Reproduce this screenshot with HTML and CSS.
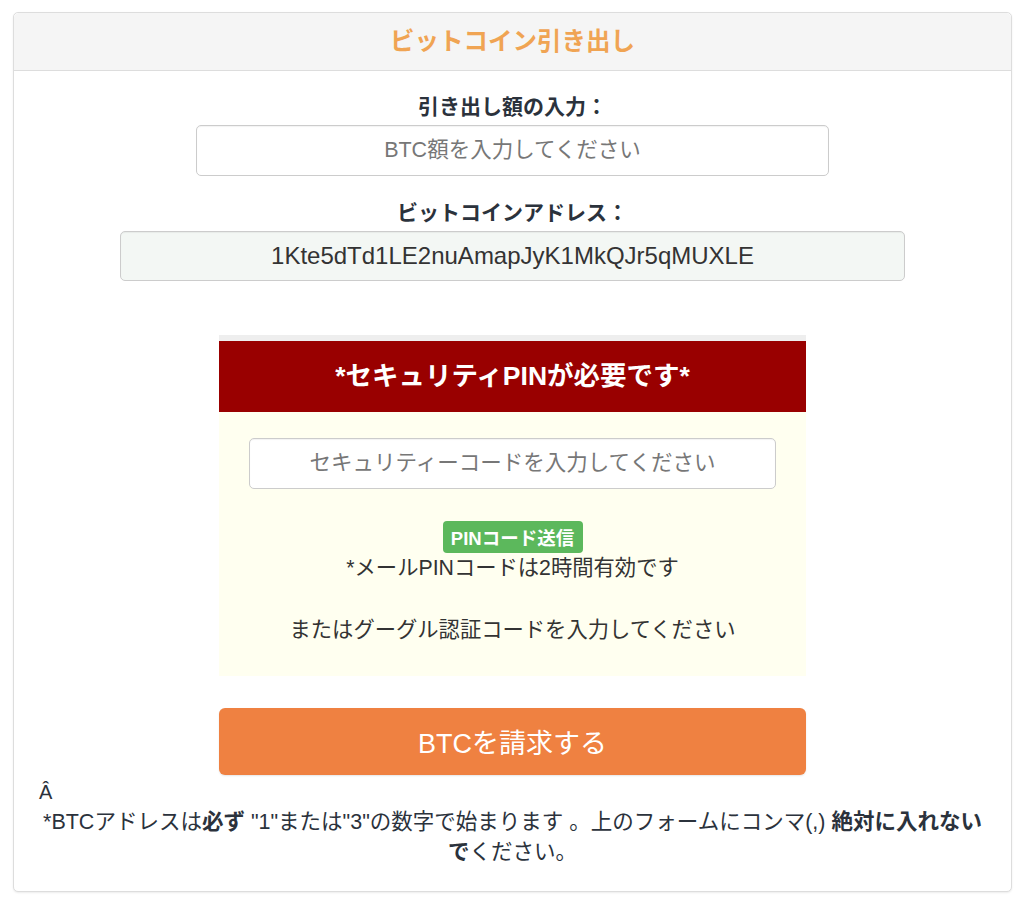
FILE: index.html
```html
<!DOCTYPE html>
<html lang="ja">
<head>
  <meta charset="UTF-8" />
  <meta name="viewport" content="width=device-width, initial-scale=1.0" />
  <title>ビットコイン引き出し</title>
  <link rel="stylesheet" href="styles.css">
</head>
<body>
  <!-- Withdraw Panel -->
  <div class="panel">
    <div class="panel-heading">ビットコイン引き出し</div>
    <div class="panel-body">
      <label class="field-label" for="amount">引き出し額の入力：</label>
      <input type="text" id="amount" class="field amount" placeholder="BTC額を入力してください" />

      <label class="field-label" for="address">ビットコインアドレス：</label>
      <input type="text" id="address" class="field address" value="1Kte5dTd1LE2nuAmapJyK1MkQJr5qMUXLE" readonly />

      <!-- Security PIN box -->
      <div class="pin-box">
        <div class="pin-heading">*セキュリティPINが必要です*</div>
        <div class="pin-body">
          <input type="text" class="field pin" placeholder="セキュリティーコードを入力してください" />
          <button class="send-pin">PINコード送信</button>
          <p class="pin-note">*メールPINコードは2時間有効です<br><br>またはグーグル認証コードを入力してください</p>
        </div>
      </div>

      <button class="request-btn">BTCを請求する</button>

      <div class="stray">Â</div>
      <p class="notice">*BTCアドレスは<b>必ず</b> "1"または"3"の数字で始まります 。上のフォームにコンマ(,) <b>絶対に入れないで</b>ください。</p>
    </div>
  </div>
</body>
</html>
```

FILE: styles.css
```css
/* Global Styles */
body {
  font-family: 'Liberation Sans', 'Noto Sans CJK JP', sans-serif;
  margin: 0;
  padding: 12px 12px 16px 13px;
  background: #fff;
  color: #333;
}
/* Panel */
.panel {
  border: 1px solid #ddd;
  border-radius: 5px;
  box-shadow: 0 1px 2px rgba(0, 0, 0, 0.08);
  background: #fff;
}
.panel-heading {
  height: 57px;
  line-height: 57px;
  text-align: center;
  background: #f5f5f5;
  border-bottom: 1px solid #ddd;
  border-radius: 5px 5px 0 0;
  color: #f0a453;
  font-size: 24.5px;
  font-weight: bold;
}
.panel-body {
  display: flex;
  flex-direction: column;
  align-items: center;
  padding: 24px 25px 24px;
}
.field-label {
  font-size: 21px;
  font-weight: bold;
  line-height: 24px;
  color: #2b323c;
  margin-bottom: 6px;
}
.field {
  box-sizing: border-box;
  height: 51px;
  border: 1px solid #ccc;
  border-radius: 5px;
  text-align: center;
  font-family: inherit;
  font-size: 21.5px;
  color: #333;
  background: #fff;
  box-shadow: inset 0 1px 1px rgba(0, 0, 0, 0.05);
}
.field::placeholder {
  color: #777;
}
.amount {
  width: 633px;
  margin-bottom: 25px;
}
.address {
  width: 785px;
  height: 50px;
  background: #f3f7f4;
  font-size: 24px;
  color: #333;
}
/* Security PIN Box */
.pin-box {
  width: 587px;
  margin-top: 54px;
  border-top: 6px solid #eee;
  background: #fffff0;
}
.pin-heading {
  height: 71px;
  line-height: 71px;
  background: #990000;
  color: #fff;
  text-align: center;
  font-size: 26.5px;
  font-weight: bold;
}
.pin-body {
  display: flex;
  flex-direction: column;
  align-items: center;
  padding: 26px 30px 30px;
}
.pin {
  width: 100%;
}
.send-pin {
  margin-top: 32px;
  width: 140px;
  height: 32px;
  border: none;
  border-radius: 4px;
  background: #5cb85c;
  color: #fff;
  font-family: inherit;
  font-size: 18.5px;
  font-weight: bold;
  padding: 0;
}
.pin-note {
  margin: 0;
  text-align: center;
  font-size: 21.3px;
  line-height: 31px;
  color: #333;
}
.request-btn {
  width: 587px;
  height: 67px;
  margin-top: 32px;
  border: none;
  border-radius: 6px;
  background: #ef8141;
  color: #fff;
  font-family: inherit;
  font-size: 27px;
  box-shadow: 0 1px 2px rgba(0, 0, 0, 0.1);
}
.stray {
  align-self: flex-start;
  margin-top: 4px;
  font-size: 20px;
  line-height: 26px;
  color: #2b323c;
}
.notice {
  max-width: 945px;
  margin: 2px 0 0;
  text-align: center;
  font-size: 21.5px;
  line-height: 30px;
  color: #2b323c;
}
```
